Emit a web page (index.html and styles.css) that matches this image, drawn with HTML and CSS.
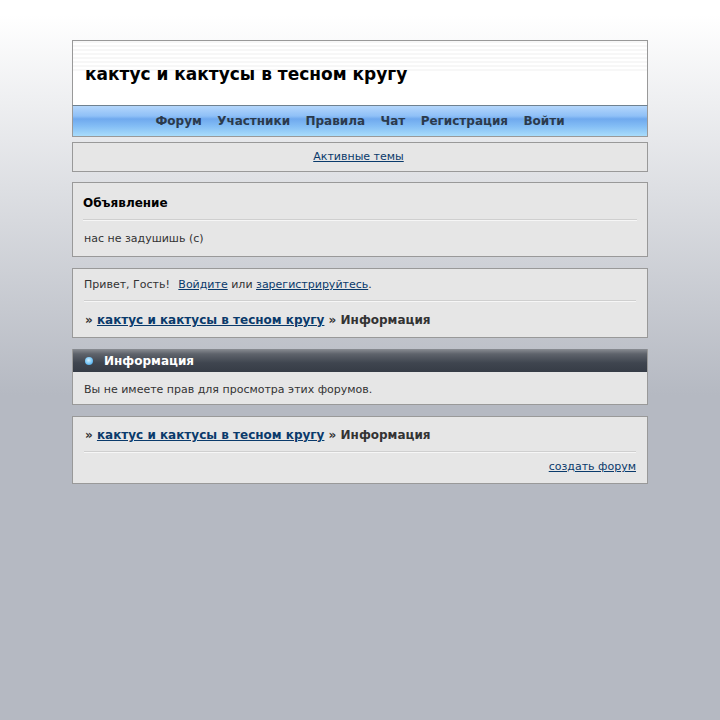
FILE: index.html
```html
<!DOCTYPE html>
<html lang="ru">
<head>
<meta charset="utf-8">
<title>кактус и кактусы в тесном кругу</title>
<link rel="stylesheet" href="styles.css">
</head>
<body>
<div class="wrap">
  <header class="head">
    <h1 class="title">кактус и кактусы в тесном кругу</h1>
  </header>
  <nav class="nav">
    <a>Форум</a><a>Участники</a><a>Правила</a><a>Чат</a><a>Регистрация</a><a>Войти</a>
  </nav>
  <div class="box active"><a class="link" href="#">Активные темы</a></div>
  <section class="box announce">
    <h2 class="ann-title">Объявление</h2>
    <hr class="rule">
    <p class="ann-text">нас не задушишь (с)</p>
  </section>
  <section class="box welcome">
    <p class="hello">Привет, Гость!<span class="gap"></span><a class="link" href="#">Войдите</a> или <a class="link" href="#">зарегистрируйтесь</a>.</p>
    <hr class="rule">
    <p class="crumbs">» <a class="link" href="#">кактус и кактусы в тесном кругу</a> » Информация</p>
  </section>
  <section class="info">
    <h2 class="info-head"><span class="dot"></span>Информация</h2>
    <p class="info-body">Вы не имеете прав для просмотра этих форумов.</p>
  </section>
  <section class="box foot">
    <p class="crumbs top">» <a class="link" href="#">кактус и кактусы в тесном кругу</a> » Информация</p>
    <hr class="rule">
    <p class="make"><a class="link" href="#">создать форум</a></p>
  </section>
</div>
</body>
</html>
```
FILE: styles.css
```css
html { height: 100%; }
body {
  margin: 0;
  min-height: 720px;
  background: linear-gradient(to bottom, #ffffff 15px, #b5b9c2 395px, #b5b9c2 100%) no-repeat;
  font-family: "DejaVu Sans", sans-serif;
  font-size: 11px;
  color: #333;
}
p, h1, h2 { margin: 0; }
.wrap { width: 576px; margin: 0 auto; padding-top: 40px; }
.head {
  height: 65px;
  box-sizing: border-box;
  border: 1px solid #999;
  border-bottom: 0;
  background:
    repeating-linear-gradient(to bottom, #f7f7f7 0, #f7f7f7 2px, #ffffff 2px, #ffffff 4px) 0 0 / 100% 30px no-repeat,
    #fff;
  padding: 23px 12px 0;
}
.title { font-size: 17px; line-height: 20px; color: #000; font-weight: bold; }
.nav {
  height: 32px;
  box-sizing: border-box;
  border: 1px solid #8a979f;
  border-color: #6f8190 #999 #999;
  background: linear-gradient(to bottom, #b4d6fb 0, #8fc0f7 10px, #6fa9ee 13px, #83bdf5 20px, #a8dcfb 30px);
  display: flex;
  justify-content: center;
  align-items: center;
  gap: 15.4px;
  font-size: 12px;
  font-weight: bold;
  color: #2b3a4c;
}
.box { background: #e6e6e6; border: 1px solid #999; box-sizing: border-box; }
.link { color: #0a3a6b; text-decoration: underline; }
.active { margin-top: 5px; height: 30px; text-align: center; line-height: 27px; padding-right: 3px; }
.announce { margin-top: 10px; height: 75px; padding: 12px 10px 0 10px; }
.ann-title { font-size: 12px; line-height: 16px; color: #000; font-weight: bold; }
.rule { border: 0; height: 2px; background: linear-gradient(to bottom, #cfcfcf 0, #cfcfcf 1px, #f6f6f6 1px); margin: 0; }
.announce .rule { margin-top: 8px; }
.ann-text { margin: 11px 0 0 1px; line-height: 14px; }
.welcome { margin-top: 11px; height: 70px; padding: 8px 11px 0; }
.hello { line-height: 15px; }
.gap { display: inline-block; width: 8.5px; }
.welcome .rule { margin-top: 8px; }
.crumbs { margin-top: 10px; font-size: 12px; line-height: 16px; font-weight: bold; padding-left: 1px; }
.info { margin-top: 11px; border: 1px solid #999; border-top: 0; background: #e6e6e6; height: 56px; box-sizing: border-box; }
.info-head {
  height: 23px;
  box-sizing: border-box;
  margin: 0 -1px;
  background: linear-gradient(to bottom, #8a8d93 0, #5e636b 5px, #3f454f 14px, #363c46 23px);
  border: 1px solid #999;
  border-width: 0 1px;
  color: #fff;
  font-size: 12px;
  line-height: 15px;
  font-weight: bold;
  padding: 2px 0 0 12px;
  display: flex;
  align-items: center;
}
.dot {
  width: 8px; height: 8px; border-radius: 50%;
  background: radial-gradient(circle at 45% 40%, #d4f1ff 0, #6cc0f5 60%, #2d7fc0 100%);
  margin-right: 11px;
  margin-top: -2px;
}
.info-body { padding: 11px 11px 0; line-height: 14px; }
.foot { margin-top: 11px; height: 68px; padding: 0 11px 0; }
.crumbs.top { margin-top: 10px; }
.foot .rule { margin-top: 8px; }
.make { text-align: right; margin-top: 7px; line-height: 14px; }
```
